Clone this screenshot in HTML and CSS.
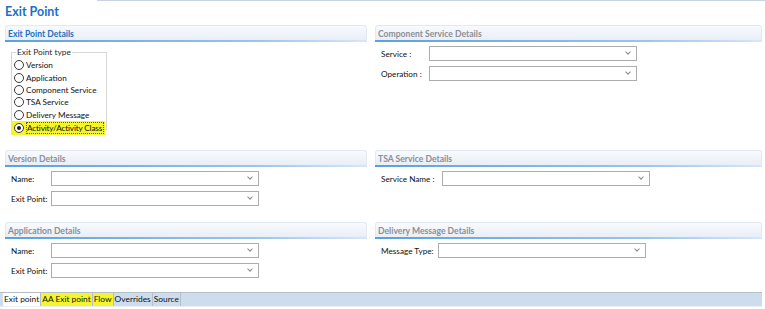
FILE: index.html
```html
<!DOCTYPE html>
<html lang="en">
<head>
    <meta charset="UTF-8">
    <title>Exit Point</title>
    <link rel="stylesheet" href="styles.css">
</head>
<body>
    <div class="top-line"></div>
    <h1 class="page-title">Exit Point</h1>

    <div class="sections">
        <!-- row 1 -->
        <section class="panel">
            <div class="panel-head active">Exit Point Details</div>
            <fieldset class="type-box">
                <legend>Exit Point type</legend>
                <label class="radio"><span class="dot"></span>Version</label>
                <label class="radio"><span class="dot"></span>Application</label>
                <label class="radio"><span class="dot"></span>Component Service</label>
                <label class="radio"><span class="dot"></span>TSA Service</label>
                <label class="radio"><span class="dot"></span>Delivery Message</label>
                <label class="radio checked marked"><span class="dot"></span><span class="boxed">Activity/Activity Class</span></label>
            </fieldset>
        </section>
        <section class="panel">
            <div class="panel-head">Component Service Details</div>
            <div class="fields lbl-48">
                <div class="field"><span class="lbl">Service :</span><div class="select"></div></div>
                <div class="field"><span class="lbl">Operation :</span><div class="select"></div></div>
            </div>
        </section>

        <!-- row 2 -->
        <section class="panel">
            <div class="panel-head">Version Details</div>
            <div class="fields lbl-40">
                <div class="field"><span class="lbl">Name:</span><div class="select"></div></div>
                <div class="field"><span class="lbl">Exit Point:</span><div class="select"></div></div>
            </div>
        </section>
        <section class="panel">
            <div class="panel-head">TSA Service Details</div>
            <div class="fields lbl-61">
                <div class="field"><span class="lbl">Service Name :</span><div class="select"></div></div>
            </div>
        </section>

        <!-- row 3 -->
        <section class="panel">
            <div class="panel-head">Application Details</div>
            <div class="fields lbl-40">
                <div class="field"><span class="lbl">Name:</span><div class="select"></div></div>
                <div class="field"><span class="lbl">Exit Point:</span><div class="select"></div></div>
            </div>
        </section>
        <section class="panel">
            <div class="panel-head">Delivery Message Details</div>
            <div class="fields lbl-57">
                <div class="field"><span class="lbl">Message Type:</span><div class="select"></div></div>
            </div>
        </section>
    </div>

    <div class="tabbar">
        <span class="tab selected">Exit point</span>
        <span class="tab marked">AA Exit point</span>
        <span class="tab marked">Flow</span>
        <span class="tab">Overrides</span>
        <span class="tab">Source</span>
    </div>
</body>
</html>
```

FILE: styles.css
```css
body {
    margin: 0;
    padding: 0;
    width: 765px;
    height: 309px;
    overflow: hidden;
    background: #ffffff;
    font-family: Lato, "Open Sans", sans-serif;
    font-size: 8.2px;
    color: #111;
    position: relative;
}

.top-line {
    height: 1px;
    margin-left: 97px;
    background: #c9d4e2;
}

.page-title {
    margin: 0;
    padding: 2px 0 0 5px;
    height: 22px;
    box-sizing: border-box;
    font-size: 12.5px;
    font-weight: bold;
    color: #1b6fc4;
    line-height: 18px;
}

.sections {
    display: grid;
    grid-template-columns: 362px 387px;
    grid-template-rows: 125px 72px 71px;
    column-gap: 8px;
    padding: 2px 0 0 5px;
}

.panel {
    display: flex;
    flex-direction: column;
}

/* section header with soft gradient and blue underline */
.panel-head {
    height: 17px;
    box-sizing: border-box;
    padding: 2px 0 0 2px;
    border: 1px solid #e3e9f1;
    border-bottom: none;
    border-radius: 3px 3px 0 0;
    background: linear-gradient(#f8fafd, #e6edf6);
    color: #8b8f96;
    font-weight: bold;
    font-size: 8.6px;
    line-height: 12px;
    position: relative;
}

.panel-head::after {
    content: "";
    position: absolute;
    left: -1px;
    right: -1px;
    bottom: 0;
    height: 2px;
    background: linear-gradient(90deg, #5aa0de, #9cc5ec 70%, #d7e7f7);
}

.panel-head.active {
    color: #1b6fc4;
}

/* exit point type group */
.type-box {
    margin: 5px 0 0 6px;
    padding: 1px 4px 2px 2px;
    width: 96px;
    height: 83px;
    box-sizing: border-box;
    border: 1px solid #d6d6d6;
    display: flex;
    flex-direction: column;
}

.type-box legend {
    padding: 0 1px;
    margin-left: 2px;
    font-size: 8.4px;
    line-height: 11px;
    color: #2a2a2a;
}

.radio {
    display: flex;
    align-items: center;
    height: 12.4px;
    font-size: 8.2px;
    white-space: nowrap;
}

.dot {
    width: 8px;
    height: 8px;
    border: 1px solid #3a3a3a;
    border-radius: 50%;
    margin-right: 2px;
    flex-shrink: 0;
    background: #fff;
    position: relative;
}

.radio.checked .dot::after {
    content: "";
    position: absolute;
    left: 2px;
    top: 2px;
    width: 4px;
    height: 4px;
    border-radius: 50%;
    background: #1a1a1a;
}

.marked {
    background: #f4f52a;
}

.radio.marked {
    margin-left: -3px;
    padding-left: 3px;
    margin-right: -3px;
    height: 14px;
}

.boxed {
    flex-shrink: 0;
    border: 1px dotted #555;
    padding: 0 1px 0 0;
    line-height: 10px;
    letter-spacing: -0.15px;
}

/* label + dropdown rows */
.fields {
    display: flex;
    flex-direction: column;
    gap: 5px;
    padding: 4px 0 0 6px;
}

.field {
    display: flex;
    align-items: center;
    height: 15px;
}

.lbl {
    flex-shrink: 0;
    font-size: 8.2px;
    white-space: nowrap;
}

.lbl-40 .lbl { width: 40px; }
.lbl-48 .lbl { width: 48px; }
.lbl-57 .lbl { width: 57px; }
.lbl-61 .lbl { width: 61px; }

.select {
    width: 208px;
    height: 15px;
    box-sizing: border-box;
    border: 1px solid #acacac;
    background: #fff;
    position: relative;
}

.select::after {
    content: "";
    position: absolute;
    right: 6px;
    top: 3px;
    width: 3px;
    height: 3px;
    border-right: 1px solid #8a8a8a;
    border-bottom: 1px solid #8a8a8a;
    transform: rotate(45deg);
}

/* bottom tabs */
.tabbar {
    position: absolute;
    left: 0;
    top: 292px;
    width: 762px;
    height: 15px;
    box-sizing: border-box;
    border-top: 1px solid #b6bec8;
    border-bottom: 1px solid #e9eef4;
    background: #cddded;
    display: flex;
    padding-left: 3px;
}

.tab {
    font-size: 8.4px;
    line-height: 13px;
    padding: 0 1px;
    border-right: 1px solid #b6bec8;
    color: #111;
    white-space: nowrap;
}

.tab.selected {
    background: #ffffff;
}
```
